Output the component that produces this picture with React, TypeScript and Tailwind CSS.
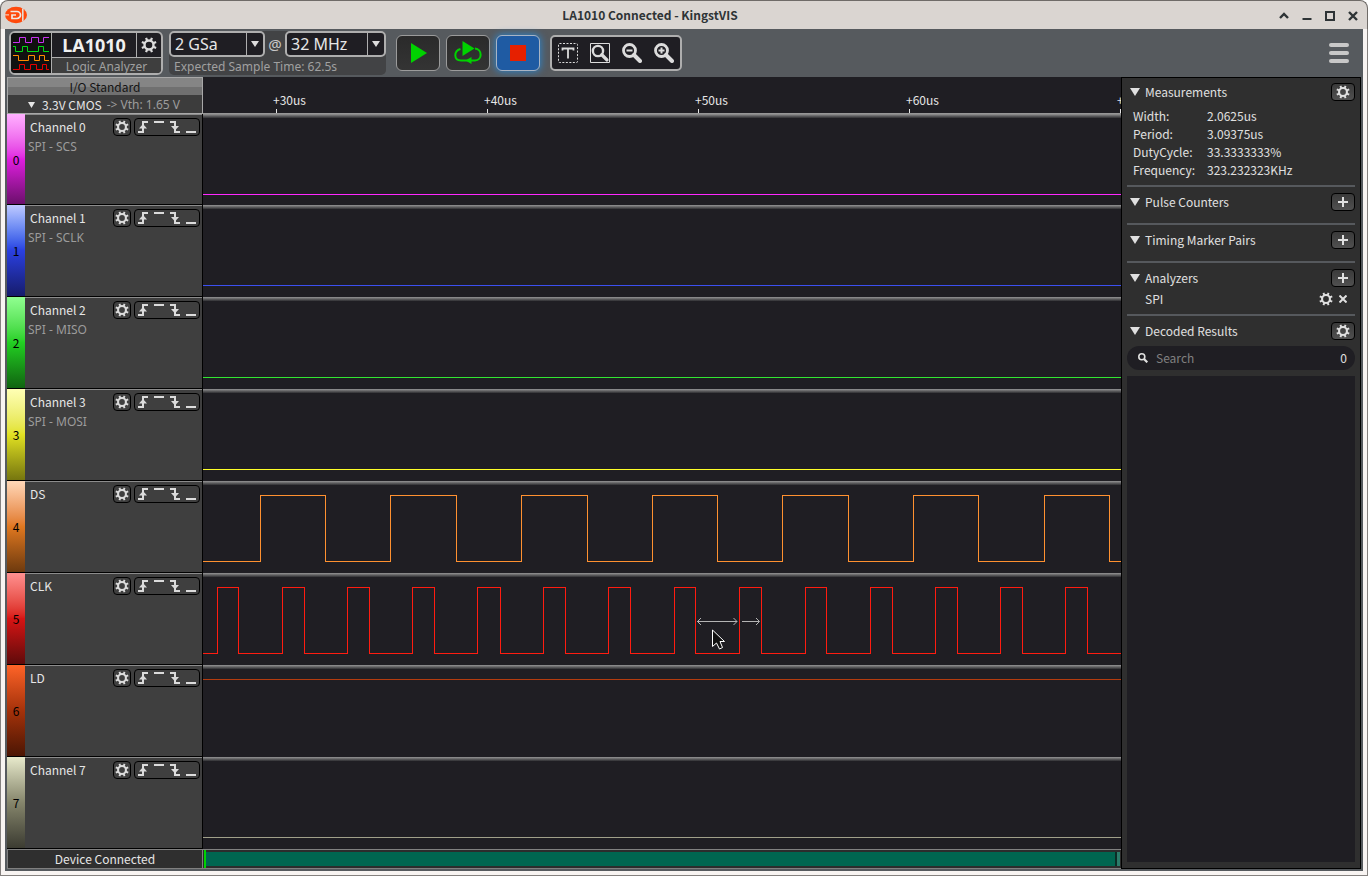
import React from "react";

type Channel = {
  id: number;
  name: string;
  decoder?: string;
  strip: string;
  color: string;
  startHigh?: boolean;
  edges?: number[];
};

const channels: Channel[] = [
  { id: 0, name: "Channel 0", decoder: "SPI - SCS", strip: "from-[#ffb0ff] via-[#e01ee0] to-[#6c0f6c]", color: "#ff28ff" },
  { id: 1, name: "Channel 1", decoder: "SPI - SCLK", strip: "from-[#c0caff] via-[#2a40e2] to-[#161c6c]", color: "#3c50f0" },
  { id: 2, name: "Channel 2", decoder: "SPI - MISO", strip: "from-[#90ff90] via-[#22d022] to-[#106410]", color: "#32e632" },
  { id: 3, name: "Channel 3", decoder: "SPI - MOSI", strip: "from-[#ffffb4] via-[#e2e222] to-[#76760f]", color: "#ffff28" },
  {
    id: 4,
    name: "DS",
    strip: "from-[#ffd8b8] via-[#e07820] to-[#6e3a0e]",
    color: "#ff9130",
    edges: [57, 122, 187, 253, 318, 384, 449, 514, 579, 645, 710, 775, 841, 906],
  },
  {
    id: 5,
    name: "CLK",
    strip: "from-[#ff9090] via-[#d81414] to-[#600a0a]",
    color: "#ff1c10",
    edges: [
      14, 35, 79, 101, 144, 166, 209, 231, 274, 297, 340, 362, 405, 427, 471, 492, 536, 558, 602, 623, 667, 689, 732,
      754, 797, 819, 862, 884,
    ],
  },
  { id: 6, name: "LD", strip: "from-[#ff6428] via-[#a5320a] to-[#4c1604]", color: "#b43c0f", startHigh: true },
  { id: 7, name: "Channel 7", strip: "from-[#e8eacc] via-[#86866c] to-[#3c3c32]", color: "#a0a08a" },
];

const marks = ["+30us", "+40us", "+50us", "+60us", "+70us"];

const measurements = [
  ["Width:", "2.0625us"],
  ["Period:", "3.09375us"],
  ["DutyCycle:", "33.3333333%"],
  ["Frequency:", "323.232323KHz"],
];

const HIGH = 10.5;
const LOW = 76.5;

function wavePath(ch: Channel) {
  let high = !!ch.startHigh;
  let d = `M0 ${high ? HIGH : LOW}`;
  for (const x of ch.edges ?? []) {
    high = !high;
    d += `H${x + 0.5}V${high ? HIGH : LOW}`;
  }
  return d + "H4000";
}

function Gear({ className }: { className: string }) {
  return (
    <svg viewBox="0 0 16 16" className={className} fill="none" stroke="currentColor">
      <circle cx="8" cy="8" r="4.5" strokeWidth="2.4" />
      {[22.5, 67.5, 112.5, 157.5, 202.5, 247.5, 292.5, 337.5].map((a) => (
        <path key={a} d="M8 .3V3.4" strokeWidth="2.2" transform={`rotate(${a} 8 8)`} />
      ))}
    </svg>
  );
}

function Plus() {
  return (
    <svg viewBox="0 0 10 10" className="h-[10px] w-[10px]" stroke="currentColor" strokeWidth="2">
      <path d="M5 0V10M0 5H10" />
    </svg>
  );
}

function Triangle({ className }: { className: string }) {
  return (
    <svg viewBox="0 0 10 8" preserveAspectRatio="none" className={className} fill="currentColor">
      <path d="M0 0H10L5 8Z" />
    </svg>
  );
}

function Magnifier({ sign, boxed }: { sign?: string; boxed?: boolean }) {
  return (
    <svg viewBox="0 0 20 20" className="h-5 w-5" fill="none" stroke="#dcdcdc">
      {boxed && <path d="M.5 .5H19.5V19.5H.5Z" strokeWidth="1" />}
      <g transform={boxed ? "translate(1.6 1.6) scale(.85)" : undefined}>
        <circle cx="7.5" cy="7.5" r="6" strokeWidth="2.8" />
        <path d="M12 12L18 18" strokeWidth="4" strokeLinecap="round" />
        {sign && <path d={sign} strokeWidth="2" />}
      </g>
    </svg>
  );
}

function TitleBar() {
  return (
    <header className="flex h-[29px] items-center rounded-t-lg border-x border-t border-[#6f6b68] bg-[#dad5d1] px-[3px] text-[#2e3436]">
      <svg viewBox="0 0 24 18" className="h-[18px] w-6 shrink-0">
        <ellipse cx="12" cy="9" rx="11" ry="8.3" fill="#ff4a0c" />
        <path d="M6.500 5.500H13A3.500 3.500 0 0 1 13 12.500H8V9H12" fill="none" stroke="#f0e8e2" strokeWidth="1.700" />
        <path d="M1 8.900H5" stroke="#f0e8e2" strokeWidth="1" />
        <path d="M18.800 2.500V15.500" stroke="#e4dcd6" strokeWidth="1.600" />
      </svg>
      <h1 className="flex-1 text-center text-[12px] leading-[18px] font-bold">LA1010 Connected - KingstVIS</h1>
      <div className="flex">
        <button aria-label="Shade" className="flex h-5 w-[23px] items-center justify-center">
          <svg viewBox="0 0 12 12" className="h-3 w-3" fill="none" stroke="currentColor" strokeWidth="2.4">
            <path d="M2 9L6 5L10 9" />
          </svg>
        </button>
        <button aria-label="Minimize" className="flex h-5 w-[23px] items-center justify-center">
          <svg viewBox="0 0 12 12" className="h-3 w-3" stroke="currentColor" strokeWidth="2">
            <path d="M1.5 10H10.5" />
          </svg>
        </button>
        <button aria-label="Maximize" className="flex h-5 w-[23px] items-center justify-center">
          <svg viewBox="0 0 12 12" className="h-3 w-3" fill="none" stroke="currentColor" strokeWidth="2">
            <path d="M2 3H10V11H2Z" />
          </svg>
        </button>
        <button aria-label="Close" className="flex h-5 w-[23px] items-center justify-center">
          <svg viewBox="0 0 12 12" className="h-3 w-3" stroke="currentColor" strokeWidth="2.4">
            <path d="M2 3L10 11M10 3L2 11" />
          </svg>
        </button>
      </div>
    </header>
  );
}

function DeviceBox() {
  return (
    <div className="flex h-11 w-[154px] overflow-hidden rounded-md border-2 border-[#aeaeae] bg-[#1f1e23] font-['Noto_Sans',sans-serif]">
      <svg viewBox="0 0 40 40" className="h-10 w-10 shrink-0 bg-[#101010]" fill="none" strokeWidth="1">
        <path stroke="#c832f0" d="M2 9.5H8.500V4.500H14.500V9.500H20.500V4.500H27.500V9.500H32.500V4.500H38" />
        <path stroke="#00dc14" d="M2 13.500H4.500V18.500H11.500V13.500H16.500V18.500H27.500V13.500H32.500V18.500H38" />
        <path stroke="#ff8c00" d="M2 22.500H7.500V27.500H17.500V22.500H23.500V27.500H28.500V22.500H33.500V27.500H38" />
        <path stroke="#e60000" d="M2 36.500H8.500V31.500H13.500V36.500H19.500V31.500H25.500V36.500H31.500V31.500H35.500V36.500H38" />
      </svg>
      <div className="flex flex-1 flex-col border-l border-[#aeaeae]">
        <div className="flex h-[25px] border-b border-[#aeaeae]">
          <div className="flex-1 text-center text-[18px] leading-[25px] font-bold text-[#f0f0f0]">LA1010</div>
          <button
            aria-label="Device settings"
            className="flex w-[25px] items-center justify-center border-l border-[#aeaeae] text-[#dcdcdc]"
          >
            <Gear className="h-4 w-4" />
          </button>
        </div>
        <div className="flex-1 bg-[#3e3e3e] text-center text-[12px] leading-[17px] text-[#a0a0a0]">Logic Analyzer</div>
      </div>
    </div>
  );
}

function Picker({ label, value, width }: { label: string; value: string; width: string }) {
  return (
    <label className={`flex h-[26px] rounded-[5px] border-2 border-[#aeaeae] bg-[#1f1e23] ${width}`}>
      <select
        aria-label={label}
        className="min-w-0 flex-1 appearance-none bg-transparent pl-1 text-[16px] leading-[22px] text-[#e6e6e6] outline-none"
      >
        <option>{value}</option>
      </select>
      <span className="flex w-[17px] items-center justify-center border-l border-[#aeaeae] text-[#dcdcdc]">
        <Triangle className="h-[6px] w-2" />
      </span>
    </label>
  );
}

function Toolbar() {
  return (
    <div className="flex items-start pt-[2px] pr-3 pb-[2px] pl-[2px]">
      <DeviceBox />
      <div className="ml-[6px] h-11 w-[217px] rounded-[5px] bg-[#424345] font-['Noto_Sans',sans-serif]">
        <div className="flex items-center justify-between">
          <Picker label="Sample depth" value="2 GSa" width="w-24" />
          <span className="text-[15px] leading-[26px] text-[#c8c8c8]">@</span>
          <Picker label="Sample rate" value="32 MHz" width="w-[101px]" />
        </div>
        <p className="pl-[5px] text-[12px] leading-[19px] text-[#a0a0a0]">Expected Sample Time: 62.5s</p>
      </div>

      <div className="mt-1 ml-[10px] flex gap-[6px]">
        <button
          aria-label="Start"
          className="flex h-9 w-11 items-center justify-center rounded-md border border-[#9b9b9b] bg-linear-to-b from-[#2a2a2a] to-[#343434]"
        >
          <svg viewBox="0 0 18 20" className="h-5 w-[18px]" fill="#00d200">
            <path d="M2 0L18 10L2 20Z" />
          </svg>
        </button>
        <button
          aria-label="Start repeatedly"
          className="flex h-9 w-11 items-center justify-center rounded-md border border-[#9b9b9b] bg-linear-to-b from-[#2a2a2a] to-[#343434]"
        >
          <svg viewBox="0 0 28 24" className="h-6 w-7" fill="#00d200">
            <path d="M8.5 0L20.5 7.5L8.5 15Z" />
            <path
              d="M6.5 8C-.5 10 -.5 19.5 7 19.5H21C28.500 19.500 28.500 8 21 7.500"
              fill="none"
              stroke="#00d200"
              strokeWidth="2"
            />
            <path d="M17.500 16V23L11.500 19.500Z" />
          </svg>
        </button>
        <button
          aria-label="Stop"
          className="flex h-9 w-11 items-center justify-center rounded-md border border-[#a8b4c4] bg-[#1f5ba3] shadow-[0_0_7px_1px_#2f7fc0]"
        >
          <span className="h-4 w-4 bg-[#e62000]" />
        </button>
      </div>

      <div className="mt-1 ml-[10px] flex h-9 items-center gap-3 rounded-[5px] border-2 border-[#aeaeae] bg-[#1f1e23] px-[6px]">
        <button aria-label="Measure">
          <svg viewBox="0 0 20 20" className="h-5 w-5" fill="none" stroke="#dcdcdc">
            <rect x=".5" y=".5" width="19" height="19" rx="1" strokeDasharray="2 1.5" />
            <path d="M4.500 7.500V5.500H15.500V7.500M10 5V15.500" strokeWidth="1.8" />
          </svg>
        </button>
        <button aria-label="Zoom to fit">
          <Magnifier boxed />
        </button>
        <button aria-label="Zoom out">
          <Magnifier sign="M4.500 7.500H10.500" />
        </button>
        <button aria-label="Zoom in">
          <Magnifier sign="M4.500 7.500H10.500M7.500 4.500V10.500" />
        </button>
      </div>

      <button aria-label="Menu" className="mt-3 ml-auto flex flex-col gap-1">
        <span className="h-1 w-5 rounded-full bg-[#c8c8c8]" />
        <span className="h-1 w-5 rounded-full bg-[#c8c8c8]" />
        <span className="h-1 w-5 rounded-full bg-[#c8c8c8]" />
      </button>
    </div>
  );
}

const triggers = [
  { label: "Rising edge", path: "M3 13H8V3H13", arrow: "M4 9.500L8 5L12 9.500Z" },
  { label: "High level", path: "M3 3H13" },
  { label: "Falling edge", path: "M3 3H8V13H13", arrow: "M4 7L8 11.500L12 7Z" },
  { label: "Low level", path: "M3 13H13" },
];

function ChannelRow({ ch }: { ch: Channel }) {
  return (
    <div className="flex border-r border-r-black">
      <div
        className={`flex w-[18px] items-center justify-center border-b border-black bg-linear-to-b pt-px text-[12px] leading-[18px] text-black ${ch.strip}`}
      >
        {ch.id}
      </div>
      <div className="flex-1 border-t border-b border-t-[#8c8c8c] border-b-black bg-[#3f3f3f] pt-[3px] pr-[2px] pl-[3px]">
        <div className="flex h-[18px] items-center gap-[3px]">
          <span className="flex-1 pl-[2px] text-[12px] leading-[18px] text-[#e6e6e6]">{ch.name}</span>
          <button
            aria-label={`${ch.name} settings`}
            className="flex h-[18px] w-[18px] items-center justify-center rounded border border-black text-[#dcdcdc]"
          >
            <Gear className="h-[14px] w-[14px]" />
          </button>
          <div className="flex h-[18px] rounded border border-black">
            {triggers.map((t) => (
              <button key={t.label} aria-label={t.label}>
                <svg viewBox="0 0 16 16" className="h-4 w-4" stroke="#dcdcdc" strokeWidth="2" fill="none">
                  <path d={t.path} />
                  {t.arrow && <path d={t.arrow} fill="#dcdcdc" stroke="none" />}
                </svg>
              </button>
            ))}
          </div>
        </div>
        {ch.decoder && (
          <p className="pt-[2px] font-['Noto_Sans',sans-serif] text-[12px] leading-[18px] text-[#9c9c9c]">{ch.decoder}</p>
        )}
      </div>
    </div>
  );
}

function WaveRow({ ch }: { ch: Channel }) {
  return (
    <div className="min-w-0">
      <div className="h-1 bg-linear-to-b from-[#969696] to-[#303033]" />
      <svg className="block h-[84px] w-full" fill="none">
        <path d={wavePath(ch)} stroke={ch.color} shapeRendering="crispEdges" />
        {ch.id === 5 && (
          <>
            <path d="M494 44.500H534M498 41L494.500 44.500L498 48M530.500 41L534 44.500L530.500 48" stroke="#b4b4b4" />
            <path d="M539 44.500H556M553 41L556.500 44.500L553 48" stroke="#b4b4b4" />
            <path
              d="M509.500 53V69.500L513.500 66L516.500 72L519.500 70.500L517 64.500H521.500Z"
              fill="#101010"
              stroke="#ffffff"
            />
          </>
        )}
      </svg>
    </div>
  );
}

function Sidebar() {
  return (
    <aside className="flex w-[196px] shrink-0 flex-col">
      <div className="h-[37px] border border-[#a8a8a8]">
        <div className="h-[17px] bg-linear-to-b from-[#858585] from-50% to-[#707070] to-50% text-center text-[12px] leading-[18px] text-[#141414]">
          I/O Standard
        </div>
        <button className="flex h-[18px] w-full items-center bg-[#3c3c3c] pt-[2px] pl-5 text-[12px] leading-[18px] text-[#e6e6e6]">
          <Triangle className="h-[6px] w-[7px]" />
          <span className="ml-[7px]">3.3V CMOS</span>
          <span className="ml-[5px] font-['Noto_Sans',sans-serif] text-[#9c9c9c]">-&gt; Vth: 1.65 V</span>
        </button>
      </div>
      <div className="grid flex-1 grid-rows-[91fr_repeat(7,92fr)]">
        {channels.map((ch) => (
          <ChannelRow key={ch.id} ch={ch} />
        ))}
      </div>
      <div className="h-5 border border-[#808080] bg-[#2f2f2f] text-center text-[12px] leading-[18px] text-[#e6e6e6]">
        Device Connected
      </div>
    </aside>
  );
}

function WaveView() {
  return (
    <main className="flex min-w-0 flex-1 flex-col bg-[#1f1e23]">
      <div className="flex h-[37px] overflow-hidden border-b border-[#969696] pt-[14px] pl-[70px]">
        {marks.map((m) => (
          <div key={m} className="w-[211px] shrink-0 text-[12px] leading-[18px] text-[#e6e6e6]">
            {m}
            <div className="ml-[3px] h-1 w-px bg-[#e6e6e6]" />
          </div>
        ))}
      </div>
      <div className="grid flex-1 grid-rows-[91fr_repeat(7,92fr)]">
        {channels.map((ch) => (
          <WaveRow key={ch.id} ch={ch} />
        ))}
      </div>
      <div className="flex h-5 border-y border-[#808080] bg-[#2c2c2c] py-[2px] pl-px">
        <div className="-my-[2px] w-[2px] bg-[#00d200]" />
        <div className="flex-1 bg-[#006650]" />
        <div className="w-[2px] bg-[#0c2c26]" />
        <div className="w-[3px] bg-[#2c7c6a]" />
        <div className="w-px" />
      </div>
    </main>
  );
}

function PanelHeader({ title, icon, action }: { title: string; icon: "gear" | "plus"; action: string }) {
  return (
    <div className="flex h-[18px] items-center">
      <Triangle className="ml-[3px] h-2 w-[10px]" />
      <h2 className="ml-[5px] flex-1">{title}</h2>
      <button
        aria-label={action}
        className="flex h-[18px] w-6 items-center justify-center rounded border border-black bg-linear-to-b from-[#3a3a3a] to-[#505050] text-[#e0e0e0]"
      >
        {icon === "gear" ? <Gear className="h-[14px] w-[14px]" /> : <Plus />}
      </button>
    </div>
  );
}

function SidePanel() {
  return (
    <aside className="flex w-60 shrink-0 flex-col border border-black bg-[#2f2f2f] px-[5px] pt-[5px] pb-[6px] text-[12px] leading-[18px] text-[#e0e0e0]">
      <section className="border-b-2 border-[#56595d] pb-[6px]">
        <PanelHeader title="Measurements" icon="gear" action="Measurement settings" />
        <dl className="grid grid-cols-[74px_1fr] pt-[6px] pl-[6px]">
          {measurements.map(([k, v]) => (
            <React.Fragment key={k}>
              <dt>{k}</dt>
              <dd>{v}</dd>
            </React.Fragment>
          ))}
        </dl>
      </section>
      <section className="border-b-2 border-[#56595d] pt-[6px] pb-3">
        <PanelHeader title="Pulse Counters" icon="plus" action="Add pulse counter" />
      </section>
      <section className="border-b-2 border-[#56595d] pt-[6px] pb-3">
        <PanelHeader title="Timing Marker Pairs" icon="plus" action="Add timing marker pair" />
      </section>
      <section className="border-b-2 border-[#56595d] pt-[6px] pb-[6px]">
        <PanelHeader title="Analyzers" icon="plus" action="Add analyzer" />
        <div className="mt-[3px] flex items-center pr-2 pl-[18px]">
          <span className="flex-1">SPI</span>
          <button aria-label="SPI settings">
            <Gear className="h-[14px] w-[14px]" />
          </button>
          <button aria-label="Remove SPI" className="ml-[6px]">
            <svg viewBox="0 0 8 8" className="h-2 w-2" stroke="currentColor" strokeWidth="2">
              <path d="M.5 .5L7.500 7.500M7.500 .5L.5 7.500" />
            </svg>
          </button>
        </div>
      </section>
      <section className="flex flex-1 flex-col pt-[6px]">
        <PanelHeader title="Decoded Results" icon="gear" action="Decoded results settings" />
        <label className="mt-[6px] flex h-6 items-center rounded-full bg-[#1f1e23] pr-2 pl-[11px]">
          <svg viewBox="0 0 10 10" className="h-[10px] w-[10px] shrink-0" fill="none" stroke="currentColor">
            <circle cx="3.800" cy="3.800" r="3" strokeWidth="1.600" />
            <path d="M6 6L9.300 9.300" strokeWidth="2.200" />
          </svg>
          <input
            type="text"
            aria-label="Search"
            placeholder="Search"
            className="ml-2 min-w-0 flex-1 bg-transparent outline-none placeholder:text-[#808080]"
          />
          <span>0</span>
        </label>
        <div className="mt-[6px] flex-1 bg-[#1f1e23]" />
      </section>
    </aside>
  );
}

export default function App() {
  return (
    <div className="flex min-h-screen flex-col bg-white font-['Noto_Sans_CJK_SC',sans-serif]">
      <TitleBar />
      <div className="flex flex-1 border-x border-b border-[#85817f] bg-[#f8f4f2] px-1 pb-1">
        <div className="flex min-w-0 flex-1 flex-col bg-[#565a5e] px-[2px] pb-[2px]">
          <Toolbar />
          <div className="flex flex-1">
            <Sidebar />
            <WaveView />
            <SidePanel />
          </div>
        </div>
      </div>
    </div>
  );
}
